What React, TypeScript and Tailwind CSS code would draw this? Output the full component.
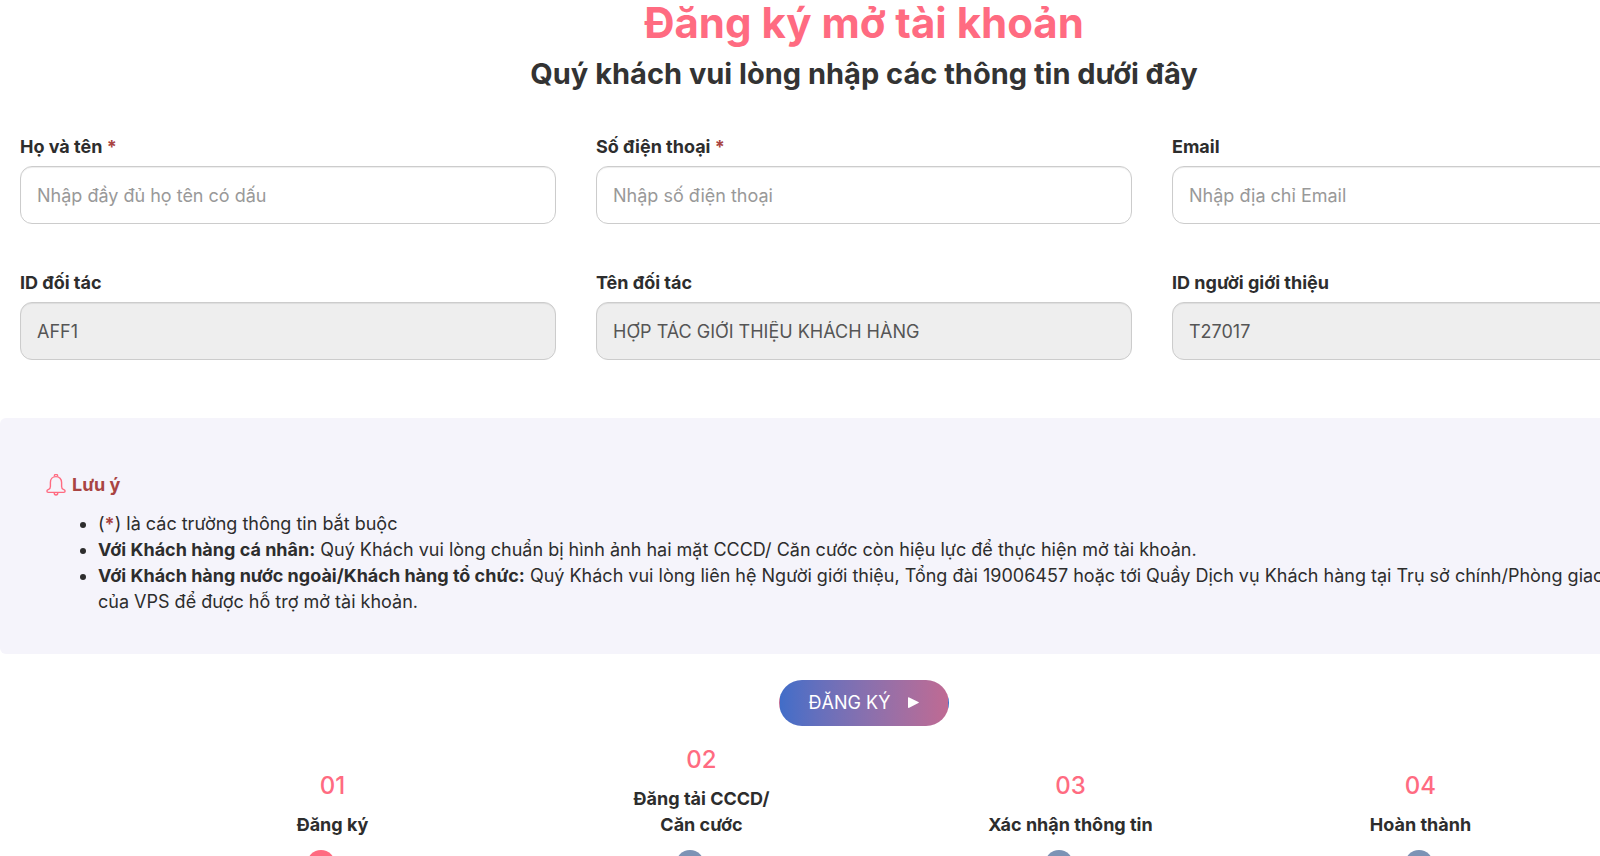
import React from 'react';

type FieldProps = {
    id: string;
    label: string;
    type?: 'text' | 'tel' | 'email';
    placeholder?: string;
    value?: string;
    required?: boolean;
    disabled?: boolean;
};

const fields: FieldProps[] = [
    {
        id: 'fullName',
        label: 'Họ và tên',
        placeholder: 'Nhập đầy đủ họ tên có dấu',
        required: true,
    },
    {
        id: 'phone',
        label: 'Số điện thoại',
        type: 'tel',
        placeholder: 'Nhập số điện thoại',
        required: true,
    },
    {
        id: 'email',
        label: 'Email',
        type: 'email',
        placeholder: 'Nhập địa chỉ Email',
    },
    { id: 'partnerId', label: 'ID đối tác', value: 'AFF1', disabled: true },
    {
        id: 'partnerName',
        label: 'Tên đối tác',
        value: 'HỢP TÁC GIỚI THIỆU KHÁCH HÀNG',
        disabled: true,
    },
    {
        id: 'referrerId',
        label: 'ID người giới thiệu',
        value: 'T27017',
        disabled: true,
    },
];

const steps = [
    { number: '01', lines: ['Đăng ký'], active: true },
    { number: '02', lines: ['Đăng tải CCCD/', 'Căn cước'] },
    { number: '03', lines: ['Xác nhận thông tin'] },
    { number: '04', lines: ['Hoàn thành'], last: true },
];

const Field = ({
    id,
    label,
    type = 'text',
    placeholder,
    value,
    required,
    disabled,
}: FieldProps) => (
    <div className="flex flex-col gap-[6px]">
        <label htmlFor={id} className="font-bold leading-[26px]">
            {label}
            {required && <span className="text-[#a94442]"> *</span>}
        </label>
        <input
            id={id}
            name={id}
            type={type}
            defaultValue={value}
            placeholder={placeholder}
            disabled={disabled}
            className="h-[58px] w-full rounded-xl border border-[#ccc] bg-white px-4 text-[#555] shadow-[inset_0_1px_1px_rgba(0,0,0,0.075)] outline-none placeholder:text-[#999] disabled:bg-[#eee]"
        />
    </div>
);

const BellIcon = () => (
    <svg
        className="h-[22px] w-5"
        viewBox="0 0 20 22"
        fill="none"
        stroke="#ff6b81"
        strokeWidth="1.4"
        strokeLinejoin="round"
        aria-hidden="true"
    >
        <path d="M8.4 2.6V2a1.6 1.6 0 0 1 3.2 0v.6" />
        <path d="M10 2.600c-3.300 0-5.600 2.500-5.600 5.800v4c0 1.500-.5 2.300-1.800 2.900-1.200.5-1.700 1-1.700 1.800 0 .8.5 1.300 1.300 1.300h15.600c.8 0 1.300-.5 1.300-1.300 0-.8-.5-1.300-1.700-1.800-1.300-.6-1.800-1.400-1.800-2.900V8.400c0-3.300-2.300-5.800-5.600-5.800z" />
        <path d="M8.200 18.500c0 1.500.7 2.500 1.800 2.500s1.800-1 1.800-2.500" />
    </svg>
);

const Notice = () => (
    <section className="rounded-md bg-[#f5f4fb] pt-[54px] pr-[70px] pb-[39px] pl-[46px]">
        <div className="flex items-center gap-[6px]">
            <BellIcon />
            <h3 className="font-bold leading-[26px] text-[#a94442]">Lưu ý</h3>
        </div>
        <ul className="mt-[13px] list-disc pl-[52px] leading-[26px]">
            <li>
                (<span className="font-bold text-[#a94442]">*</span>) là các
                trường thông tin bắt buộc
            </li>
            <li>
                <b>Với Khách hàng cá nhân:</b> Quý Khách vui lòng chuẩn bị hình
                ảnh hai mặt CCCD/ Căn cước còn hiệu lực để thực hiện mở tài
                khoản.
            </li>
            <li>
                <b>Với Khách hàng nước ngoài/Khách hàng tổ chức:</b> Quý Khách
                vui lòng liên hệ Người giới thiệu, Tổng đài 19006457 hoặc tới
                Quầy Dịch vụ Khách hàng tại Trụ sở chính/Phòng giao dịch của VPS
                để được hỗ trợ mở tài khoản.
            </li>
        </ul>
    </section>
);

const Steps = () => (
    <ol className="mt-5 grid grid-cols-[369fr_369fr_369fr_351fr] items-end pr-[134px] pl-[136px]">
        {steps.map(({ number, lines, active, last }) => (
            <li key={number} className="flex flex-col items-center">
                <div className={last ? 'pl-1 text-center' : 'pl-6 text-center'}>
                    <p className="text-2xl font-medium leading-7 text-[#ff6b81]">
                        {number}
                    </p>
                    <p className="mt-3 font-bold leading-[26px]">
                        {lines.map((line) => (
                            <span key={line} className="block">
                                {line}
                            </span>
                        ))}
                    </p>
                </div>
                <span
                    className={
                        active
                            ? 'mt-3 size-7 rounded-full bg-[#ff6b81]'
                            : 'mt-3 size-7 rounded-full bg-[#7c93b5]'
                    }
                />
            </li>
        ))}
    </ol>
);

export default function App() {
    return (
        <div className="h-screen overflow-hidden bg-white font-['Inter',sans-serif] text-lg text-[#2d2d2d]">
            {/* the form runs a little wider than the window */}
            <main className="w-[108%]">
                <h1 className="text-center text-[42px] font-bold leading-[46px] text-[#ff6b81]">
                    Đăng ký mở tài khoản
                </h1>
                <h2 className="mt-2 text-center text-[29px] font-bold leading-10 text-[#333]">
                    Quý khách vui lòng nhập các thông tin dưới đây
                </h2>
                <form>
                    <div className="mt-10 grid grid-cols-3 gap-x-10 gap-y-[46px] px-5">
                        {fields.map((field) => (
                            <Field key={field.id} {...field} />
                        ))}
                    </div>
                    <div className="mt-[58px]">
                        <Notice />
                    </div>
                    <div className="mt-[26px] flex justify-center">
                        <button
                            type="button"
                            className="flex h-[46px] items-center gap-[18px] rounded-full border border-transparent bg-linear-to-r from-[#416dc8] to-[#bf6a93] px-[29px] text-white"
                        >
                            ĐĂNG KÝ
                            <svg
                                className="h-3 w-[11px]"
                                viewBox="0 0 11 12"
                                fill="currentColor"
                                aria-hidden="true"
                            >
                                <path d="M0 1Q0-.3 1.200.4L10.400 4.900Q11.400 5.500 10.400 6.100L1.200 10.800Q0 11.300 0 10z" />
                            </svg>
                        </button>
                    </div>
                </form>
                <Steps />
            </main>
        </div>
    );
}
